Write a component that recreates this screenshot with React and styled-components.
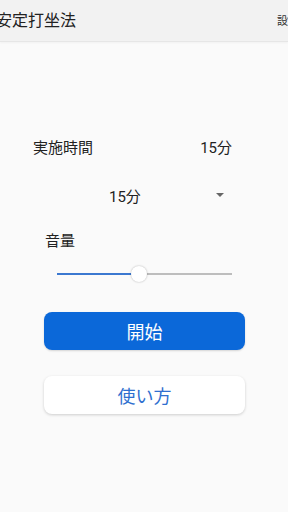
import React from "react";
import styled, { createGlobalStyle } from "styled-components";

const Global = createGlobalStyle`
  html, body { margin: 0; padding: 0; background: #fafafa; }
  body { font-family: Roboto, "Noto Sans CJK JP", sans-serif; color: #222; }
  #root { width: 288px; height: 512px; overflow: hidden; }
`;

const Page = styled.div`
  width: 288px;
  height: 512px;
  background: #fafafa;
  display: flex;
  flex-direction: column;
`;

const Header = styled.header`
  height: 41px;
  flex: none;
  background: #f2f2f2;
  border-bottom: 1px solid #e6e6e6;
  box-shadow: 0 1px 2px rgba(0,0,0,0.04);
  display: flex;
  align-items: center;
  justify-content: space-between;
  overflow: hidden;
`;

const Title = styled.div`
  font-size: 16px;
  margin-left: -4px;
  color: #222;
  white-space: nowrap;
  margin-top: -3px;
`;

const HeaderLink = styled.div`
  font-size: 11px;
  color: #333;
  white-space: nowrap;
  margin-right: -11px;
  margin-top: -2px;
`;

const Body = styled.main`
  display: flex;
  flex-direction: column;
  padding-top: 92px;
`;

const Row = styled.div`
  display: flex;
  justify-content: space-between;
  align-items: center;
  padding: 0 56px 0 33px;
  height: 24px;
  font-size: 15px;
  color: #222;
`;

const Select = styled.div`
  margin-top: 25px;
  height: 24px;
  display: flex;
  align-items: center;
  padding-left: 109px;
  padding-right: 64px;
  font-size: 15px;
  color: #222;
`;

const SelectValue = styled.span`
  flex: 1;
`;

const Caret = styled.span`
  width: 0;
  height: 0;
  border-left: 4px solid transparent;
  border-right: 4px solid transparent;
  border-top: 4px solid #666;
`;

const Label = styled.div`
  margin-top: 22px;
  padding-left: 45px;
  font-size: 15px;
  height: 24px;
  line-height: 24px;
  color: #222;
`;

const Slider = styled.div`
  position: relative;
  margin: 12px 56px 0 57px;
  height: 18px;
  display: flex;
  align-items: center;
`;

const Track = styled.div`
  height: 2px;
  background: ${p => p.$color};
  flex: ${p => p.$grow};
`;

const Thumb = styled.div`
  position: absolute;
  top: 1px;
  width: 16px;
  height: 16px;
  border-radius: 50%;
  background: #fff;
  box-shadow: 0 0 2px rgba(0,0,0,0.3);
  transform: translateX(-50%);
`;

const Button = styled.button`
  display: block;
  margin: ${p => p.$mt}px 43px 0 44px;
  height: 38px;
  border-radius: 8px;
  border: none;
  font-family: Roboto, "Noto Sans CJK JP", sans-serif;
  font-size: 18px;
  cursor: pointer;
  background: ${p => (p.$primary ? "#0b68d9" : "#ffffff")};
  color: ${p => (p.$primary ? "#ffffff" : "#2f6fcf")};
  box-shadow: ${p => (p.$primary ? "0 1px 2px rgba(0,0,0,0.15)" : "0 1px 3px rgba(0,0,0,0.18)")};
`;

export default function App() {
  const value = 0.47;
  return (
    <Page>
      <Global />
      <Header>
        <Title>安定打坐法</Title>
        <HeaderLink>設定</HeaderLink>
      </Header>
      <Body>
        <Row>
          <span>実施時間</span>
          <span>15分</span>
        </Row>
        <Select>
          <SelectValue>15分</SelectValue>
          <Caret />
        </Select>
        <Label>音量</Label>
        <Slider>
          <Track $color="#3b78d0" $grow={value} />
          <Track $color="#bdbdbd" $grow={1 - value} />
          <Thumb style={{ left: `${value * 100}%` }} />
        </Slider>
        <Button $primary $mt={29}>開始</Button>
        <Button $mt={26}>使い方</Button>
      </Body>
    </Page>
  );
}
